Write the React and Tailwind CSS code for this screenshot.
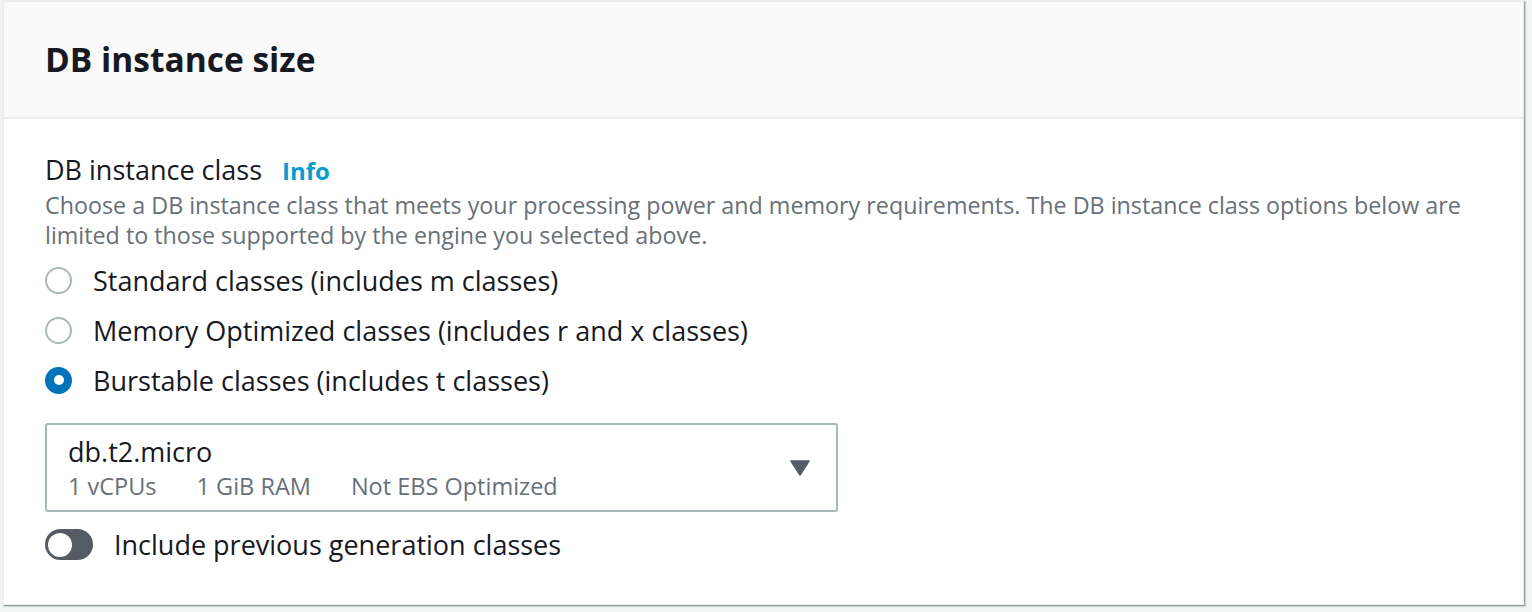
export default function App() {
  const radios = [
    { label: 'Standard classes (includes m classes)', checked: false },
    { label: 'Memory Optimized classes (includes r and x classes)', checked: false },
    { label: 'Burstable classes (includes t classes)', checked: true },
  ]

  return (
    <div
      className="w-[1532px] h-[612px] bg-[#f2f3f3] pl-[3px] pt-[1px] text-[#16191f]"
      style={{ fontFamily: '"Open Sans", "Noto Sans", sans-serif' }}
    >
      <div className="w-[1521px] h-[604px] bg-white border border-[#eaeded] shadow-[1px_1px_1px_0_rgba(0,28,36,0.3),1px_1px_1px_1px_rgba(0,28,36,0.1)] flex flex-col">
        <div className="h-[117px] bg-[#fafafa] border-b-2 border-[#eaeded] px-[41px] flex items-center">
          <h2 className="text-[33.5px] font-bold leading-none pt-[1px]">DB instance size</h2>
        </div>

        <div className="px-[41px] pt-[34px]">
          <div className="flex items-baseline gap-[20px] h-[32px]">
            <span className="text-[27px] leading-[32px]">DB instance class</span>
            <a className="text-[24px] font-bold text-[#0a9ccc]">Info</a>
          </div>
          <p className="text-[23.3px] leading-[30px] text-[#687078] mt-[5px] pr-[20px]">
            Choose a DB instance class that meets your processing power and memory requirements. The DB instance class options below are limited to those supported by the engine you selected above.
          </p>

          <div className="flex flex-col gap-[22px] mt-[16px]">
            {radios.map((r) => (
              <label key={r.label} className="flex items-center gap-[21px] h-[28px]">
                {r.checked ? (
                  <span className="w-[27px] h-[27px] rounded-full bg-[#0073bb] flex items-center justify-center shrink-0">
                    <span className="w-[10px] h-[10px] rounded-full bg-white" />
                  </span>
                ) : (
                  <span className="w-[27px] h-[27px] rounded-full border-2 border-[#aab7b8] bg-white shrink-0" />
                )}
                <span className="text-[27px] leading-none">{r.label}</span>
              </label>
            ))}
          </div>

          <div className="mt-[29px] w-[793px] h-[89px] border-2 border-[#aab7b8] rounded-[3px] flex items-center pl-[21px] pr-[26px]">
            <div className="flex-1">
              <div className="text-[27px] leading-[30px]">db.t2.micro</div>
              <div className="text-[23.5px] leading-[26px] text-[#687078] flex gap-[40px] mt-[6px]">
                <span>1 vCPUs</span>
                <span>1 GiB RAM</span>
                <span>Not EBS Optimized</span>
              </div>
            </div>
            <svg width="20" height="16" viewBox="0 0 20 16">
              <path d="M1 1 H19 L10 15 Z" fill="#545b64" stroke="#545b64" strokeWidth="1.5" strokeLinejoin="round" />
            </svg>
          </div>

          <div className="flex items-center gap-[21px] mt-[17px]">
            <span className="w-[48px] h-[31px] rounded-full bg-[#545b64] flex items-center pl-[3px] shrink-0">
              <span className="w-[24px] h-[24px] rounded-full bg-white" />
            </span>
            <span className="text-[27px] leading-none">Include previous generation classes</span>
          </div>
        </div>
      </div>
    </div>
  )
}
